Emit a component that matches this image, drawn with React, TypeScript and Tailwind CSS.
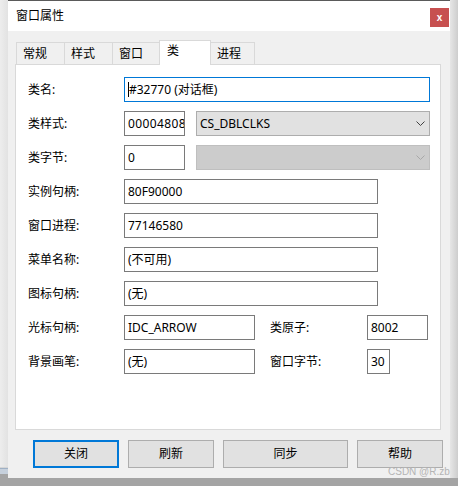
import React from "react";

const Chevron = ({ color }: { color: string }) => (
  <svg width="9" height="5" viewBox="0 0 9 5" className="shrink-0">
    <polyline points="0.5,0.5 4.5,4.5 8.5,0.5" fill="none" stroke={color} strokeWidth="1" />
  </svg>
);

const Input = ({ w, children, focused }: { w: string; children?: React.ReactNode; focused?: boolean }) => (
  <div
    className={`${w} h-[25px] box-border border ${focused ? "border-[#0078d7]" : "border-[#7a7a7a]"} bg-white flex items-center pl-[3px] text-[12px] text-black overflow-hidden whitespace-nowrap shrink-0`}
  >
    {children}
  </div>
);

const Label = ({ w, children }: { w: string; children: React.ReactNode }) => (
  <div className={`${w} shrink-0 text-[12px] text-black leading-none`}>{children}</div>
);

export default function App() {
  const tabs = [
    { t: "常规", w: "w-[48px]", sel: false },
    { t: "样式", w: "w-[48px]", sel: false },
    { t: "窗口", w: "w-[47px]", sel: false },
    { t: "类", w: "w-[52px]", sel: true },
    { t: "进程", w: "w-[44px]", sel: false },
  ];
  return (
    <div className="relative w-[458px] h-[486px] flex flex-col overflow-hidden bg-[#a4a4a4] font-[Noto_Sans,Noto_Sans_CJK_SC,sans-serif]">
      <div className="flex h-[478px]">
        {/* left background strip */}
        <div className="w-[8px] flex flex-col">
          <div className="flex-1 bg-linear-to-r from-[#ededed] to-[#e2e2e2]" />
          <div className="h-[1px] bg-[#d6d6d6]" />
          <div className="h-[6px] bg-[#c6d0dc] border-t border-[#9fb0c4]" />
          <div className="h-[4px] bg-[#a4a4a4]" />
        </div>

        {/* window */}
        <div className="w-[442px] flex flex-col bg-[#f0f0f0]">
          {/* title bar */}
          <div className="h-[31px] box-border border-t border-[#5a5a5a] bg-white flex justify-between">
            <div className="pl-[8px] pt-[8px] text-[12px] leading-[14px] text-black">窗口属性</div>
            <div className="mt-[7px] mr-[1px] w-[19px] h-[19px] bg-[#c75050] flex items-center justify-center text-white text-[10px] font-bold leading-none font-[Liberation_Sans,sans-serif]">
              x
            </div>
          </div>

          {/* body */}
          <div className="pl-[7px] pr-[9px] pt-[9px] flex flex-col">
            {/* tabs */}
            <div className="h-[24px] flex items-end pl-[1px]">
              {tabs.map((tab, i) => (
                <div
                  key={tab.t}
                  className={`${tab.w} box-border text-[12px] text-black leading-none flex pl-[6px] ${
                    tab.sel
                      ? "h-[25px] -mb-px relative z-10 bg-white border-l border-t border-r border-[#d9d9d9] pt-[4px] pl-[7px]"
                      : `h-[22px] bg-[#f0f0f0] border-t border-[#d9d9d9] pt-[5px] ${i === 4 ? "border-r" : ""} ${i === 4 ? "" : "border-l"}`
                  }`}
                >
                  {tab.t}
                </div>
              ))}
            </div>

            {/* panel */}
            <div className="h-[366px] box-border bg-white border border-[#d9d9d9] pl-[12px] pt-[12px] flex flex-col gap-[9px]">
              <div className="flex items-center">
                <Label w="w-[96px]">类名:</Label>
                <Input w="w-[306px]" focused>
                  <span className="inline-block w-px h-[15px] bg-black mr-[0px]" />
                  #32770 (对话框)
                </Input>
              </div>
              <div className="flex items-center">
                <Label w="w-[96px]">类样式:</Label>
                <Input w="w-[61px]">
                  <span className="tracking-[0.4px]">00004808</span>
                </Input>
                <div className="ml-[11px] w-[234px] h-[25px] box-border border border-[#adadad] bg-[#e1e1e1] flex items-center justify-between pl-[3px] pr-[4px] text-[12px] text-black">
                  <span>CS_DBLCLKS</span>
                  <Chevron color="#404040" />
                </div>
              </div>
              <div className="flex items-center">
                <Label w="w-[96px]">类字节:</Label>
                <Input w="w-[61px]">0</Input>
                <div className="ml-[11px] w-[234px] h-[25px] box-border border border-[#bfbfbf] bg-[#cccccc] flex items-center justify-end pr-[4px]">
                  <Chevron color="#a8a8a8" />
                </div>
              </div>
              <div className="flex items-center">
                <Label w="w-[96px]">实例句柄:</Label>
                <Input w="w-[254px]">80F90000</Input>
              </div>
              <div className="flex items-center">
                <Label w="w-[96px]">窗口进程:</Label>
                <Input w="w-[254px]">77146580</Input>
              </div>
              <div className="flex items-center">
                <Label w="w-[96px]">菜单名称:</Label>
                <Input w="w-[254px]">(不可用)</Input>
              </div>
              <div className="flex items-center">
                <Label w="w-[96px]">图标句柄:</Label>
                <Input w="w-[254px]">(无)</Input>
              </div>
              <div className="flex items-center">
                <Label w="w-[96px]">光标句柄:</Label>
                <Input w="w-[131px]">IDC_ARROW</Input>
                <div className="ml-[15px]">
                  <Label w="w-[97px]">类原子:</Label>
                </div>
                <Input w="w-[61px]">8002</Input>
              </div>
              <div className="flex items-center">
                <Label w="w-[96px]">背景画笔:</Label>
                <Input w="w-[131px]">(无)</Input>
                <div className="ml-[15px]">
                  <Label w="w-[97px]">窗口字节:</Label>
                </div>
                <Input w="w-[23px]">30</Input>
              </div>
            </div>
          </div>

          {/* buttons */}
          <div className="mt-[10px] pl-[25px] flex gap-[9px]">
            <div className="w-[86px] h-[28px] box-border border-2 border-[#0078d7] bg-[#e1e1e1] flex items-center justify-center text-[12px] text-black">
              关闭
            </div>
            <div className="w-[86px] h-[28px] box-border border border-[#adadad] bg-[#e1e1e1] flex items-center justify-center text-[12px] text-black">
              刷新
            </div>
            <div className="w-[125px] h-[28px] box-border border border-[#adadad] bg-[#e1e1e1] flex items-center justify-center text-[12px] text-black">
              同步
            </div>
            <div className="w-[86px] h-[28px] box-border border border-[#adadad] bg-[#e1e1e1] flex items-center justify-center text-[12px] text-black">
              帮助
            </div>
          </div>
        </div>

        {/* right shadow strip */}
        <div className="w-[8px] bg-linear-to-r from-[#e6e6e6] to-[#cdcdcd]" />
      </div>
      <div className="h-[8px] bg-[#a4a4a4]" />

      <div className="absolute left-[388px] top-[466px] text-[10px] leading-[12px] text-[#b4b4b4] font-[Liberation_Sans,sans-serif] whitespace-nowrap">
        CSDN @R.zb
      </div>
    </div>
  );
}
